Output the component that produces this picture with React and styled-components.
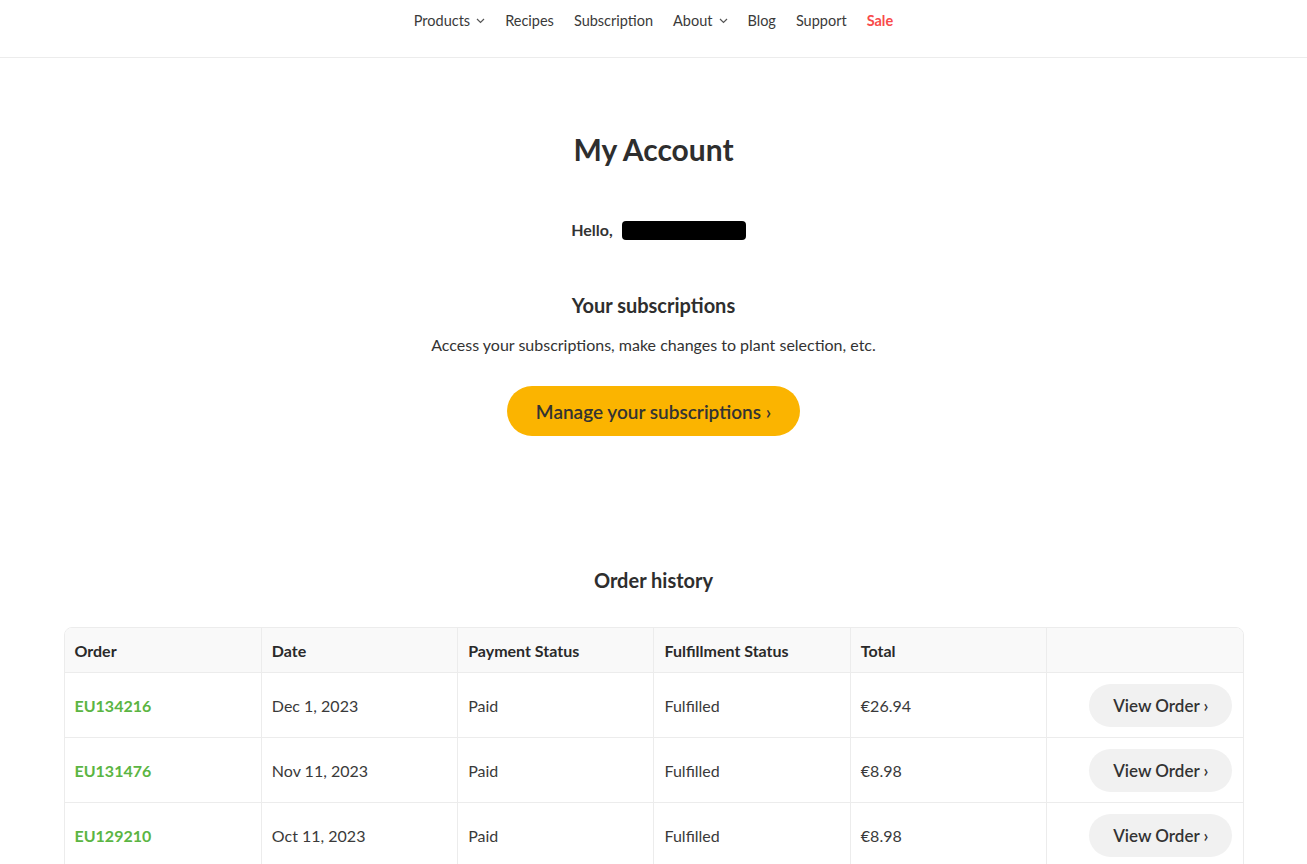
import styled, { createGlobalStyle } from "styled-components";

const Global = createGlobalStyle`
  body {
    margin: 0;
    background: #fff;
    font-family: "Lato", "Liberation Sans", sans-serif;
    color: #333;
  }
`;

const Header = styled.header`
  height: 57px;
  border-bottom: 1px solid #ececec;
  display: flex;
  justify-content: center;
`;

const Nav = styled.nav`
  display: flex;
  gap: 20px;
  padding-top: 11px;
`;

const NavItem = styled.a`
  display: flex;
  align-items: flex-start;
  gap: 6px;
  font-size: 14.5px;
  line-height: 20px;
  color: ${(p) => (p.$sale ? "#f84b4b" : "#3a3a3a")};
  font-weight: ${(p) => (p.$sale ? 700 : 400)};
  text-decoration: none;

  & > svg {
    margin-top: 7px;
  }
`;

const Main = styled.main`
  max-width: 1180px;
  margin: 0 auto;
  display: flex;
  flex-direction: column;
  align-items: center;
`;

const Title = styled.h1`
  margin: 73px 0 0;
  font-size: 30px;
  line-height: 36px;
  font-weight: 700;
  color: #2e2e2e;
`;

const Hello = styled.p`
  margin: 53px 0 0 10px;
  font-size: 16px;
  font-weight: 700;
  line-height: 20px;
  display: flex;
  align-items: center;
  gap: 9px;
`;

const Redacted = styled.span`
  display: inline-block;
  width: 124px;
  height: 19px;
  background: #000;
  border-radius: 4px;
`;

const Section = styled.h2`
  margin: ${(p) => p.$top || 0}px 0 0;
  font-size: 20px;
  line-height: 26px;
  font-weight: 700;
  color: #2e2e2e;
`;

const Text = styled.p`
  margin: 16px 0 0;
  font-size: 16px;
  line-height: 22px;
  color: #333;
`;

const Pill = styled.a`
  display: inline-flex;
  align-items: center;
  justify-content: center;
  height: ${(p) => (p.$small ? 43 : 50)}px;
  padding: 0 ${(p) => (p.$small ? 24 : 29)}px;
  border-radius: 25px;
  background: ${(p) => (p.$small ? "#f1f1f1" : "#fbb400")};
  font-size: ${(p) => (p.$small ? 17 : 19)}px;
  font-weight: 600;
  color: #333;
  text-decoration: none;
  white-space: nowrap;
`;

const ButtonWrap = styled.div`
  margin-top: 30px;
`;

const Table = styled.div`
  align-self: stretch;
  margin-top: 34px;
  border: 1px solid #ececec;
  border-radius: 8px 8px 0 0;
  overflow: hidden;
`;

const Row = styled.div`
  display: grid;
  grid-template-columns: repeat(6, 1fr);
  height: ${(p) => (p.$head ? 44 : 64)}px;
  background: ${(p) => (p.$head ? "#f9f9f9" : "#fff")};
  border-top: ${(p) => (p.$head ? "none" : "1px solid #ececec")};
`;

const Cell = styled.div`
  display: flex;
  align-items: center;
  justify-content: ${(p) => (p.$end ? "flex-end" : "flex-start")};
  padding: 0 10px;
  border-left: 1px solid #ececec;
  font-size: 16px;
  font-weight: ${(p) => (p.$head || p.$link ? 700 : 400)};
  color: ${(p) => (p.$link ? "#5bb543" : p.$head ? "#2a2a2a" : "#3a3a3a")};

  &:first-child {
    border-left: none;
  }
`;

const Chevron = () => (
  <svg width="9" height="6" viewBox="0 0 9 6" fill="none">
    <path d="M1 1l3.5 3.5L8 1" stroke="#555" strokeWidth="1.2" />
  </svg>
);

const orders = [
  ["EU134216", "Dec 1, 2023", "Paid", "Fulfilled", "€26.94"],
  ["EU131476", "Nov 11, 2023", "Paid", "Fulfilled", "€8.98"],
  ["EU129210", "Oct 11, 2023", "Paid", "Fulfilled", "€8.98"],
];

export default function App() {
  return (
    <>
      <Global />
      <Header>
        <Nav>
          <NavItem href="#">Products <Chevron /></NavItem>
          <NavItem href="#">Recipes</NavItem>
          <NavItem href="#">Subscription</NavItem>
          <NavItem href="#">About <Chevron /></NavItem>
          <NavItem href="#">Blog</NavItem>
          <NavItem href="#">Support</NavItem>
          <NavItem href="#" $sale>Sale</NavItem>
        </Nav>
      </Header>
      <Main>
        <Title>My Account</Title>
        <Hello>
          Hello, <Redacted />
        </Hello>
        <Section $top={52}>Your subscriptions</Section>
        <Text>Access your subscriptions, make changes to plant selection, etc.</Text>
        <ButtonWrap>
          <Pill href="#">Manage your subscriptions ›</Pill>
        </ButtonWrap>
        <Section $top={131}>Order history</Section>
        <Table>
          <Row $head>
            <Cell $head>Order</Cell>
            <Cell $head>Date</Cell>
            <Cell $head>Payment Status</Cell>
            <Cell $head>Fulfillment Status</Cell>
            <Cell $head>Total</Cell>
            <Cell $head />
          </Row>
          {orders.map(([id, date, pay, ful, total]) => (
            <Row key={id}>
              <Cell $link>{id}</Cell>
              <Cell>{date}</Cell>
              <Cell>{pay}</Cell>
              <Cell>{ful}</Cell>
              <Cell>{total}</Cell>
              <Cell $end>
                <Pill href="#" $small>View Order ›</Pill>
              </Cell>
            </Row>
          ))}
        </Table>
      </Main>
    </>
  );
}
